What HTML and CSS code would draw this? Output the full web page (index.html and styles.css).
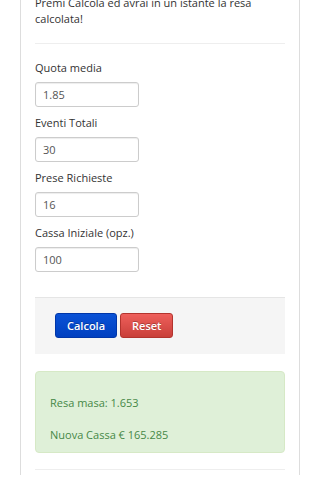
FILE: index.html
```html
<!DOCTYPE html>
<html lang="it">
<head>
<meta charset="utf-8">
<link rel="stylesheet" href="styles.css">
</head>
<body>
<div class="container">
  <p class="intro">Premi Calcola ed avrai in un istante la resa calcolata!</p>
  <hr class="sep">
  <form class="calc">
    <div class="field">
      <label class="lbl">Quota media</label>
      <input class="inp" type="text" value="1.85">
    </div>
    <div class="field">
      <label class="lbl">Eventi Totali</label>
      <input class="inp" type="text" value="30">
    </div>
    <div class="field">
      <label class="lbl">Prese Richieste</label>
      <input class="inp" type="text" value="16">
    </div>
    <div class="field">
      <label class="lbl">Cassa Iniziale (opz.)</label>
      <input class="inp" type="text" value="100">
    </div>
    <div class="actions">
      <button type="button" class="btn btn-primary">Calcola</button>
      <button type="button" class="btn btn-danger">Reset</button>
    </div>
  </form>
  <div class="alert">
    <p class="res">Resa masa: 1.653</p>
    <p class="res res-last">Nuova Cassa € 165.285</p>
  </div>
  <hr class="sep sep-bottom">
</div>
</body>
</html>
```
FILE: styles.css
```css
html, body {
  margin: 0;
  padding: 0;
  background: #fff;
}
body {
  font-family: "Open Sans", "Noto Sans", "DejaVu Sans", sans-serif;
  font-size: 11px;
  line-height: 16px;
  color: #333;
}
.container {
  margin: 0 20px;
  border-left: 1px solid #ddd;
  border-right: 1px solid #ddd;
  padding: 0 14px;
  min-height: 480px;
  box-sizing: border-box;
}
.intro {
  margin: -5px 0 0;
  padding-right: 20px;
}
.sep {
  border: 0;
  border-top: 1px solid #eee;
  margin: 16px 0;
  height: 0;
}
.calc {
  margin: 0;
}
.field {
  display: flex;
  flex-direction: column;
  align-items: flex-start;
  margin-bottom: 8px;
}
.lbl {
  display: block;
  margin-bottom: 6px;
}
.inp {
  box-sizing: border-box;
  width: 104px;
  height: 25px;
  padding: 0 7px;
  margin: 0;
  font-family: inherit;
  font-size: 11px;
  color: #555;
  background: #fff;
  border: 1px solid #ccc;
  border-radius: 3px;
  box-shadow: inset 0 1px 1px rgba(0,0,0,0.075);
}
.actions {
  margin-top: 25px;
  padding: 15px 20px 16px;
  background: #f5f5f5;
  border-top: 1px solid #e5e5e5;
  display: flex;
  gap: 3px;
}
.btn {
  height: 25px;
  padding: 0 11px;
  margin: 0;
  font-family: inherit;
  font-size: 11px;
  font-weight: 600;
  color: #fff;
  border-radius: 3px;
  text-shadow: 0 -1px 0 rgba(0,0,0,0.25);
  cursor: pointer;
}
.btn-primary {
  background: linear-gradient(#0a52d6, #0040c0);
  border: 1px solid #0036a8;
}
.btn-danger {
  background: linear-gradient(#ee5f5b, #c9403a);
  border: 1px solid #b3342e;
}
.alert {
  margin-top: 17px;
  padding: 23px 14px 9px;
  background: #dff0d8;
  border: 1px solid #d6e9c6;
  border-radius: 4px;
  color: #468847;
}
.res {
  margin: 0 0 16px;
}
.res-last {
  margin-bottom: 0;
}
.sep-bottom {
  margin-top: 16px;
}
```
